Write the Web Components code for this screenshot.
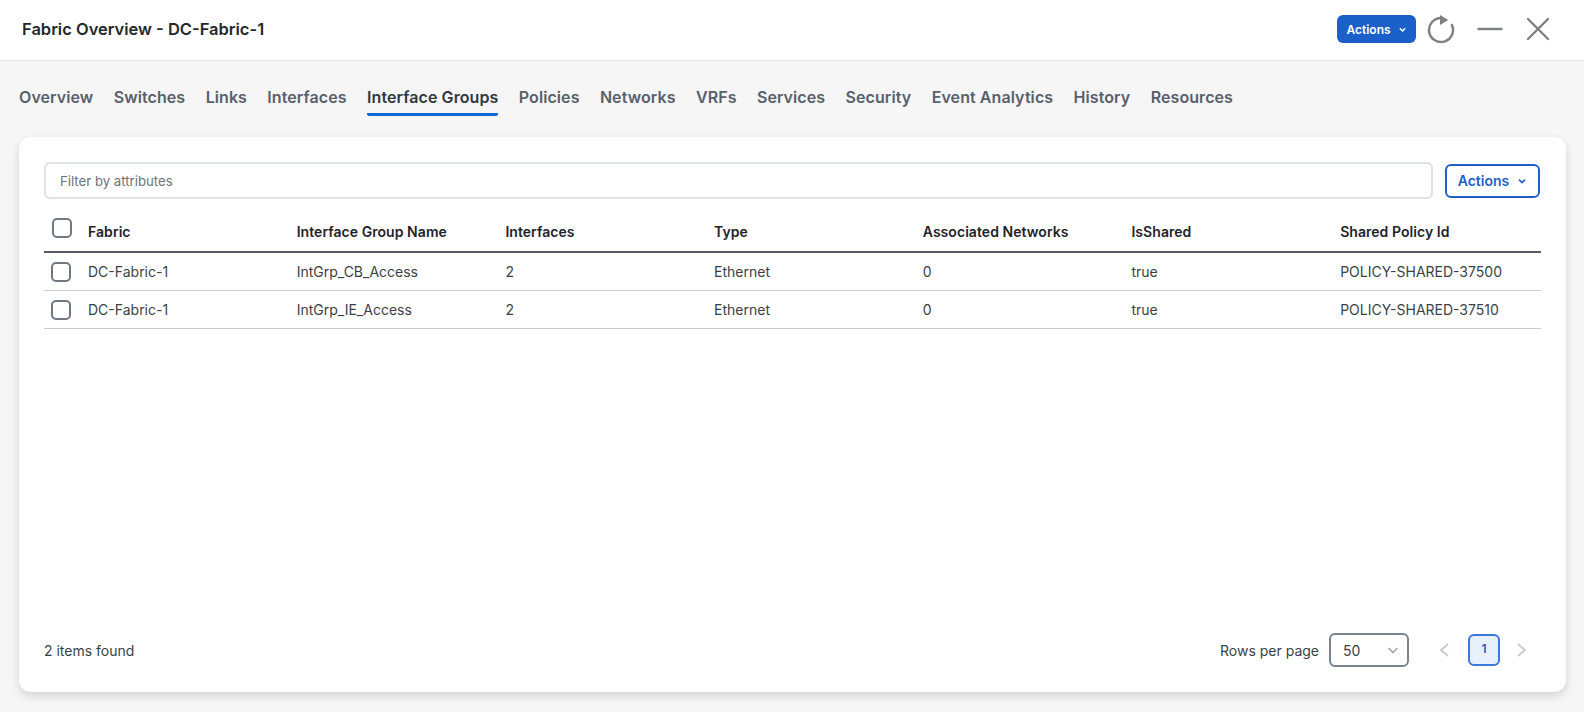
<!DOCTYPE html>
<html lang="en">
<head>
  <meta charset="UTF-8">
  <title>Fabric Overview - DC-Fabric-1</title>
  <style>
    html, body { margin: 0; height: 100%; }
    body {
      background: #f6f6f7;
      overflow: hidden;
      font-family: Inter, "Liberation Sans", sans-serif;
      color: #23282e;
    }
  </style>
</head>
<body>
  <fabric-page></fabric-page>

  <script>
    class ActionsButton extends HTMLElement {
      constructor() {
        super();
        this.attachShadow({ mode: 'open' });
        this.shadowRoot.innerHTML = `
          <style>
            :host { display: inline-flex; }
            button {
              display: flex; align-items: center; justify-content: center;
              box-sizing: border-box;
              font: 600 14px Inter, "Liberation Sans", sans-serif;
              width: 95px; height: 34px; gap: 8px;
              padding: 0;
              background: #fff; color: #1d5fc9;
              border: 2px solid #1d5fc9; border-radius: 6px;
            }
            :host([solid]) button {
              width: 79px; height: 28px; gap: 7px;
              font-size: 12px;
              background: #1b5fc8; color: #fff; border: none;
            }
            svg { width: 10px; height: 10px; fill: none; stroke: currentColor; stroke-width: 1.6; }
            :host([solid]) svg { width: 9px; height: 9px; }
          </style>
          <button><span>Actions</span><svg viewBox="0 0 10 10"><path d="M2 3.6 5 6.6 8 3.6"/></svg></button>
        `;
      }
    }
    customElements.define('actions-button', ActionsButton);

    class TopBar extends HTMLElement {
      constructor() {
        super();
        this.attachShadow({ mode: 'open' });
        this.shadowRoot.innerHTML = `
          <style>
            :host {
              display: flex; align-items: center;
              box-sizing: border-box;
              height: 61px; padding: 0 34px 2px 22px;
              background: #fff;
              border-bottom: 1px solid #dfe2e6;
            }
            h1 { margin: 0; font-size: 16.5px; font-weight: 600; color: #23282e; flex: 1; }
            .tools { display: flex; align-items: center; }
            svg { display: block; fill: none; stroke: #7f8082; stroke-width: 2.4; }
            .refresh { width: 28px; height: 30px; margin: 2px 0 0 11px; }
            .min { width: 26px; height: 26px; margin-left: 22px; }
            .close { width: 24px; height: 24px; margin-left: 23px; }
          </style>
          <h1><slot></slot></h1>
          <div class="tools">
            <actions-button solid></actions-button>
            <svg class="refresh" viewBox="0 0 28 30">
              <path d="M14 3A12 12 0 1 0 24.5 9.2"/>
              <path d="M13 0 21.3 5 13 10Z" fill="#7f8082" stroke="none"/>
            </svg>
            <svg class="min" viewBox="0 0 26 26"><path d="M.5 13H25.5"/></svg>
            <svg class="close" viewBox="0 0 24 24"><path d="M2 2 22 22M22 2 2 22" stroke-linecap="round"/></svg>
          </div>
        `;
      }
    }
    customElements.define('top-bar', TopBar);

    class TabNav extends HTMLElement {
      constructor() {
        super();
        this.attachShadow({ mode: 'open' });
        const tabs = ['Overview', 'Switches', 'Links', 'Interfaces', 'Interface Groups', 'Policies',
          'Networks', 'VRFs', 'Services', 'Security', 'Event Analytics', 'History', 'Resources'];
        const active = this.getAttribute('active');
        this.shadowRoot.innerHTML = `
          <style>
            :host {
              display: flex; gap: 20.4px;
              height: 76px; box-sizing: border-box;
              padding: 26px 0 0 19px;
              font-size: 16px; letter-spacing: .08px; font-weight: 600; color: #58606b;
            }
            span { height: 29px; box-sizing: border-box; line-height: 20px; white-space: nowrap; }
            .on { color: #32383f; border-bottom: 3px solid #0a6ad2; border-radius: 0 0 2px 2px; }
          </style>
          ${tabs.map(t => `<span class="${t === active ? 'on' : ''}">${t}</span>`).join('')}
        `;
      }
    }
    customElements.define('tab-nav', TabNav);

    class CheckBox extends HTMLElement {
      constructor() {
        super();
        this.attachShadow({ mode: 'open' }).innerHTML = `
          <style>
            :host {
              display: block; box-sizing: border-box;
              width: 20px; height: 20px;
              border: 2px solid #6f7883; border-radius: 5px; background: #fff;
            }
          </style>
        `;
      }
    }
    customElements.define('check-box', CheckBox);

    class DataTable extends HTMLElement {
      constructor() {
        super();
        this.attachShadow({ mode: 'open' });
        const cols = ['Fabric', 'Interface Group Name', 'Interfaces', 'Type', 'Associated Networks', 'IsShared', 'Shared Policy Id'];
        const rows = [
          ['DC-Fabric-1', 'IntGrp_CB_Access', '2', 'Ethernet', '0', 'true', 'POLICY-SHARED-37500'],
          ['DC-Fabric-1', 'IntGrp_IE_Access', '2', 'Ethernet', '0', 'true', 'POLICY-SHARED-37510']
        ];
        const cells = r => r.map(c => `<div>${c}</div>`).join('');
        this.shadowRoot.innerHTML = `
          <style>
            :host { display: block; font-size: 14px; color: #3a3f46; }
            .row {
              display: grid;
              grid-template-columns: 44px repeat(6, 208.7px) 1fr;
              align-items: center;
              height: 38px; box-sizing: border-box;
              border-bottom: 1px solid #c9ccd0;
            }
            .row > div { white-space: nowrap; }
            .head {
              height: 41px;
              font-weight: 600; color: #1f2329; letter-spacing: .05px;
              border-bottom: 2px solid #555b64;
            }
            .head check-box { margin-left: 8px; margin-top: -7px; }
            .body check-box { margin-left: 7px; }
          </style>
          <div class="row head"><check-box></check-box>${cells(cols)}</div>
          ${rows.map(r => `<div class="row body"><check-box></check-box>${cells(r)}</div>`).join('')}
        `;
      }
    }
    customElements.define('data-table', DataTable);

    class PagerBar extends HTMLElement {
      constructor() {
        super();
        this.attachShadow({ mode: 'open' });
        this.shadowRoot.innerHTML = `
          <style>
            :host { display: flex; align-items: center; font-size: 14px; color: #3a3f46; }
            .found { flex: 1; }
            .select {
              display: flex; align-items: center; justify-content: space-between;
              box-sizing: border-box;
              width: 80px; height: 34px; margin-left: 10px;
              padding: 0 8px 0 12px;
              border: 2px solid #7a838f; border-radius: 6px;
            }
            svg { display: block; fill: none; }
            .select svg { width: 12px; height: 12px; stroke: #9a9fa6; stroke-width: 1.4; }
            .arrow { width: 12px; height: 16px; stroke: #c7cacf; stroke-width: 1.8; }
            .prev { margin-left: 29px; }
            .next { margin-right: 13px; }
            .page {
              box-sizing: border-box;
              width: 32px; height: 32px; margin: 0 16px 0 18px;
              display: flex; align-items: center; justify-content: center;
              font-size: 12px; font-weight: 600; color: #1d5fc9;
              background: #e8f0fc;
              border: 2px solid #3b78e0; border-radius: 6px;
              padding-bottom: 3px;
            }
          </style>
          <span class="found">2 items found</span>
          <span>Rows per page</span>
          <div class="select"><span>50</span><svg viewBox="0 0 12 12"><path d="M1.5 4 6 8.5 10.5 4"/></svg></div>
          <svg class="arrow prev" viewBox="0 0 12 16"><path d="M10 2 3 8 10 14"/></svg>
          <div class="page">1</div>
          <svg class="arrow next" viewBox="0 0 12 16"><path d="M2 2 9 8 2 14"/></svg>
        `;
      }
    }
    customElements.define('pager-bar', PagerBar);

    class ContentCard extends HTMLElement {
      constructor() {
        super();
        this.attachShadow({ mode: 'open' });
        this.shadowRoot.innerHTML = `
          <style>
            :host {
              display: flex; flex-direction: column;
              box-sizing: border-box;
              width: 1547px; height: 555px; margin-left: 19px;
              padding: 25px 25px 25px 25px;
              background: #fff;
              border-radius: 12px;
              box-shadow: 0 4px 10px rgba(0,0,0,0.14);
            }
            .filter { display: flex; gap: 12px; align-items: center; padding-right: 1px; }
            input {
              flex: 1; box-sizing: border-box; height: 37px;
              padding: 0 14px;
              font: 13.2px Inter, "Liberation Sans", sans-serif;
              border: 2px solid #dfe3e7; border-radius: 6px; outline: none;
            }
            input::placeholder { color: #6d7278; opacity: 1; }
            data-table { margin-top: 13px; }
            pager-bar { margin-top: auto; }
          </style>
          <div class="filter">
            <input placeholder="Filter by attributes">
            <actions-button></actions-button>
          </div>
          <data-table></data-table>
          <pager-bar></pager-bar>
        `;
      }
    }
    customElements.define('content-card', ContentCard);

    class FabricPage extends HTMLElement {
      constructor() {
        super();
        this.attachShadow({ mode: 'open' });
        this.shadowRoot.innerHTML = `
          <style>:host { display: block; }</style>
          <top-bar>Fabric Overview - DC-Fabric-1</top-bar>
          <tab-nav active="Interface Groups"></tab-nav>
          <content-card></content-card>
        `;
      }
    }
    customElements.define('fabric-page', FabricPage);
  </script>
</body>
</html>
